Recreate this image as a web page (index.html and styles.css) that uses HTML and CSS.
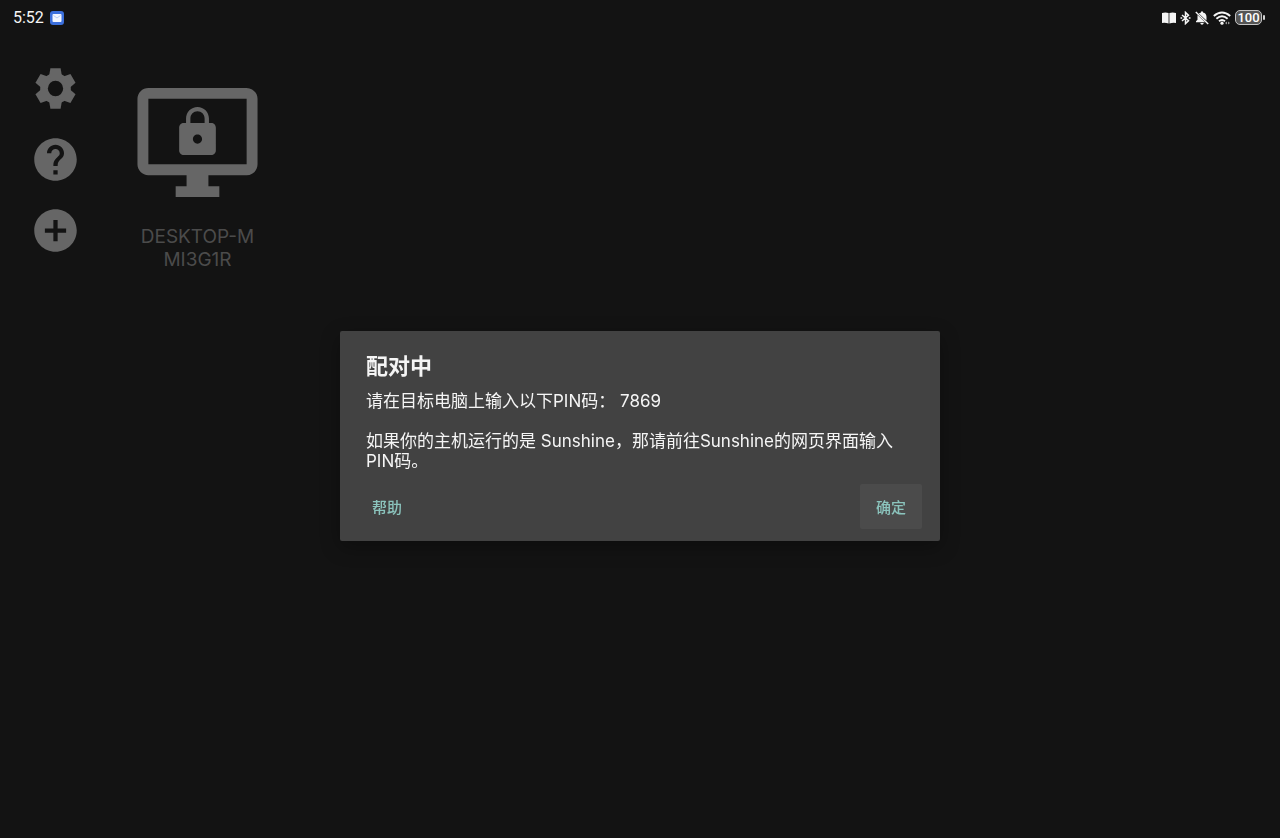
FILE: index.html
```html
<!DOCTYPE html>
<html lang="zh-CN">
  <head>
    <meta charset="UTF-8" />
    <meta name="viewport" content="width=device-width, initial-scale=1.0" />
    <title>配对中</title>
    <link rel="stylesheet" href="styles.css">
  </head>
  <body>
    <header class="status-bar">
      <div class="status-left">
        <span class="time">5:52</span>
        <svg class="mail" width="14" height="14" viewBox="0 0 14 14" aria-hidden="true">
          <rect width="14" height="14" rx="3" fill="#3b6fdc" />
          <rect x="2.5" y="3" width="9" height="8" rx="1" fill="#f2f6ff" />
          <path d="M3.500 4.500L7 7l3.500-2.500" fill="none" stroke="#a9c1f2" stroke-width=".8" />
        </svg>
      </div>
      <div class="status-right">
        <svg width="14" height="12" viewBox="0 0 14 12" aria-hidden="true">
          <path d="M0 1Q3.500 0 6.600 1V11.500Q3.500 10.500 0 11zM7.400 1Q10.500 0 14 1V11Q10.500 10.500 7.400 11.500z" fill="#f5f5f5" />
        </svg>
        <svg width="11" height="14" viewBox="0 0 11 14" aria-hidden="true">
          <path d="M2 4L8.500 9.800 5.500 12.600V1.400L8.500 4.200 2 10M.5 7h1.700M8.800 7h1.700" fill="none" stroke="#f5f5f5" stroke-width="1.500" />
        </svg>
        <svg width="14" height="14" viewBox="0 0 14 14" aria-hidden="true">
          <path d="M3.800 2.500Q4.800 1.700 6 1.400V.5h2v.9Q11.500 2.300 11.500 6v3.600zM2.500 4V8.800L1 10.300V11.200H10zM5.200 12h3.600Q8.300 13.700 7 13.700T5.200 12z" fill="#f5f5f5" />
          <path d="M.8 1L13.200 13" stroke="#f5f5f5" stroke-width="1.400" />
        </svg>
        <svg width="18" height="14" viewBox="0 0 18 14" aria-hidden="true">
          <g fill="none" stroke="#f5f5f5" stroke-width="1.900">
            <path d="M.8 5Q9-2 17.200 5" />
            <path d="M3.400 7.700Q9 2.800 14.600 7.700" />
            <path d="M6 10.300Q9 7.800 12 10.300" />
          </g>
          <circle cx="9" cy="12.200" r="1.600" fill="#f5f5f5" />
          <path d="M12 12l2-1.500v3zM17 12l-2-1.500v3z" fill="#999" />
        </svg>
        <span class="battery">100</span>
      </div>
    </header>

    <main class="home">
      <nav class="side">
        <button class="icon-button" type="button" aria-label="设置">
          <svg viewBox="-12 -12 24 24">
            <defs>
              <path id="teeth" d="M-2.400-9.500H2.400L3-6V6L2.400 9.500H-2.400L-3 6V-6z" />
              <mask id="hole">
                <rect x="-12" y="-12" width="24" height="24" fill="#fff" />
                <circle r="3.600" fill="#000" />
              </mask>
            </defs>
            <g mask="url(#hole)">
              <circle r="7.200" />
              <use href="#teeth" />
              <use href="#teeth" transform="rotate(60)" />
              <use href="#teeth" transform="rotate(120)" />
            </g>
          </svg>
        </button>
        <button class="icon-button" type="button" aria-label="帮助">
          <svg viewBox="0 0 24 24"><path d="M12 2C6.480 2 2 6.480 2 12s4.480 10 10 10 10-4.480 10-10S17.520 2 12 2zm1 17h-2v-2h2v2zm2.070-7.750l-.9.920C13.450 12.900 13 13.500 13 15h-2v-.5c0-1.100.45-2.100 1.170-2.830l1.240-1.260c.37-.36.59-.86.59-1.410 0-1.100-.9-2-2-2s-2 .9-2 2H8c0-2.210 1.790-4 4-4s4 1.790 4 4c0 .88-.36 1.680-.93 2.250z" /></svg>
        </button>
        <button class="icon-button" type="button" aria-label="添加">
          <svg viewBox="0 0 24 24"><path d="M12 2C6.480 2 2 6.480 2 12s4.480 10 10 10 10-4.480 10-10S17.520 2 12 2zm5 11h-4v4h-2v-4H7v-2h4V7h2v4h4v2z" /></svg>
        </button>
      </nav>

      <section class="computers">
        <button class="computer" type="button">
          <svg viewBox="0 0 24 24" aria-hidden="true">
            <path d="M21 2H3c-1.100 0-2 .9-2 2v12c0 1.100.9 2 2 2h7v2H8v2h8v-2h-2v-2h7c1.100 0 2-.9 2-2V4c0-1.100-.9-2-2-2zm0 14H3V4h18v12z" />
            <path transform="translate(6.960 5.070) scale(.42)" d="M18 8h-1V6c0-2.760-2.240-5-5-5S7 3.240 7 6v2H6c-1.100 0-2 .9-2 2v10c0 1.100.9 2 2 2h12c1.100 0 2-.9 2-2V10c0-1.100-.9-2-2-2zm-6 9c-1.100 0-2-.9-2-2s.9-2 2-2 2 .9 2 2-.9 2-2 2zm3.100-9H8.900V6c0-1.710 1.390-3.100 3.100-3.100 1.710 0 3.100 1.390 3.100 3.100v2z" />
          </svg>
          <span class="computer-name">DESKTOP-M<br>MI3G1R</span>
        </button>
      </section>
    </main>

    <div class="overlay">
      <div class="dialog" role="dialog" aria-labelledby="dialogTitle">
        <h1 id="dialogTitle">配对中</h1>
        <div class="message">
          <p>请在目标电脑上输入以下PIN码： 7869</p>
          <p>如果你的主机运行的是 Sunshine，那请前往Sunshine的网页界面输入PIN码。</p>
        </div>
        <div class="actions">
          <button class="action" type="button">帮助</button>
          <button class="action focused" type="button">确定</button>
        </div>
      </div>
    </div>
  </body>
</html>
```

FILE: styles.css
```css
body {
  font-family: Inter, "Noto Sans CJK SC", sans-serif;
  background-color: #131313;
  color: #f5f5f5;
  margin: 0;
}
button {
  border: none;
  padding: 0;
  background: none;
  font-family: inherit;
  cursor: pointer;
}
svg {
  display: block;
}
.status-bar {
  display: flex;
  justify-content: space-between;
  align-items: center;
  height: 35px;
  padding: 0 15px 0 13px;
}
.status-left,
.status-right {
  display: flex;
  align-items: center;
  gap: 4px;
}
.status-left {
  gap: 6px;
}
.time {
  font-family: Roboto, sans-serif;
  font-size: 16px;
}
.battery {
  position: relative;
  box-sizing: border-box;
  width: 27px;
  height: 15px;
  margin-right: 3px;
  border: 1px solid #c4c4c4;
  border-radius: 5px;
  background-color: #555;
  color: #fff;
  font-family: Roboto, sans-serif;
  font-size: 13px;
  font-weight: 500;
  line-height: 13px;
  display: flex;
  justify-content: center;
}
.battery::after {
  content: "";
  position: absolute;
  top: 4px;
  right: -4px;
  width: 2px;
  height: 5px;
  border-radius: 1px;
  background-color: #d0d0d0;
}
.home {
  display: flex;
  gap: 51px;
  padding: 28px 30px;
}
.side {
  display: flex;
  flex-direction: column;
  gap: 20px;
}
.icon-button svg {
  width: 51px;
  height: 51px;
  fill: #666;
}
.computers {
  display: flex;
  flex-wrap: wrap;
  flex: 1;
  align-items: flex-start;
  padding-top: 14px;
}
.computer svg {
  width: 131px;
  height: 131px;
  fill: #666;
}
.computer-name {
  display: block;
  margin-top: 17px;
  color: #4b4b4b;
  font-size: 19px;
  line-height: 23px;
}
.overlay {
  position: fixed;
  inset: 34px 0 0;
  display: flex;
  align-items: center;
  justify-content: center;
}
.dialog {
  box-sizing: border-box;
  width: 600px;
  max-width: 90%;
  padding: 20px 18px 12px;
  border-radius: 2px;
  background-color: #424242;
  box-shadow: 0 6px 20px rgba(0, 0, 0, 0.3);
}
.dialog h1 {
  margin: 0 8px 10px;
  font-size: 22px;
  font-weight: 600;
  line-height: 30px;
}
.message {
  margin: 0 8px 13px;
  font-size: 17px;
  line-height: 20px;
}
.message p {
  margin: 0 0 20px;
}
.message p:last-child {
  margin-bottom: 0;
}
.actions {
  display: flex;
  justify-content: space-between;
  margin-left: -2px;
}
.action {
  width: 62px;
  height: 45px;
  border-radius: 2px;
  color: #8bc4bd;
  font-size: 15px;
  font-weight: 500;
}
.action.focused {
  background-color: #4b4b4b;
}
```
